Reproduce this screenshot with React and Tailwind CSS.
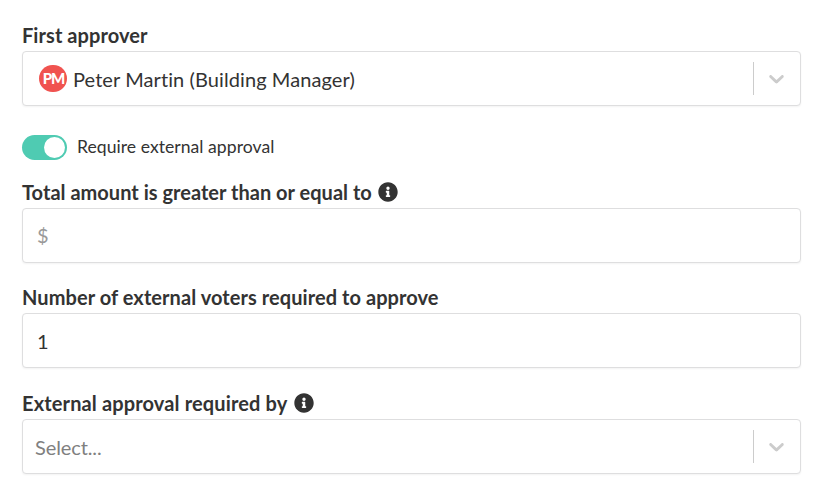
import React from "react";
import { FaInfoCircle } from "react-icons/fa";

const Label = ({ children, info, tracking = "tracking-[0.07px]" }) => (
    <label
        className={`flex h-6 items-center text-[20px] leading-6 font-bold text-[#333333] ${tracking}`}
    >
        {children}
        {info && <FaInfoCircle className="ml-[6px] h-5 w-5" />}
    </label>
);

const Chevron = () => (
    <div className="ml-auto flex items-center">
        <span className="mb-px h-[33px] w-px bg-[#cccccc]" />
        <svg
            viewBox="0 0 20 20"
            className="mr-[11px] ml-[10px] h-[25px] w-[25px] fill-[#cccccc]"
        >
            <path d="M4.516 7.548c0.436-0.446 1.043-0.481 1.576 0l3.908 3.747 3.908-3.747c0.533-0.481 1.141-0.446 1.574 0 0.436 0.445 0.408 1.197 0 1.615-0.406 0.418-4.695 4.502-4.695 4.502-0.217 0.223-0.502 0.335-0.787 0.335s-0.57-0.112-0.789-0.335c0 0-4.287-4.084-4.695-4.502s-0.436-1.17 0-1.615z" />
        </svg>
    </div>
);

const Box = ({ children }) => (
    <div className="mt-1 flex h-[55px] items-center rounded-[4px] border border-[#dededf] bg-white shadow-[0_1px_2px_rgba(0,0,0,0.05)]">
        {children}
    </div>
);

const App = () => {
    return (
        <main className="h-[493px] w-[833px] bg-white pt-[23px] pr-8 pl-[22px] font-['Lato',sans-serif] [font-variant-ligatures:none]">
            <section>
                <Label>First approver</Label>
                <Box>
                    <span className="mb-px ml-4 flex h-[27px] w-7 items-center justify-center rounded-full bg-[#f05350] pl-px text-[15px] font-black tracking-[-1.2px] text-white">
                        PM
                    </span>
                    <span className="ml-[6px] text-[20px] tracking-[0.09px] text-[#333]">
                        Peter Martin (Building Manager)
                    </span>
                    <Chevron />
                </Box>
            </section>

            {/* External approval toggle */}
            <div className="mt-[29px] flex h-[25px] items-center">
                <span className="flex h-[25px] w-[45px] items-center justify-end rounded-full bg-[#4fcbb2] p-[2px]">
                    <span className="h-[21px] w-[21px] rounded-full bg-white" />
                </span>
                <span className="mb-px ml-[10px] text-[17.6px] tracking-[0.03px] text-[#333]">
                    Require external approval
                </span>
            </div>

            <section className="mt-5">
                <Label info tracking="tracking-[0.02px]">
                    Total amount is greater than or equal to
                </Label>
                <Box>
                    <span className="mb-px ml-[14px] text-[20px] text-[#999]">
                        $
                    </span>
                </Box>
            </section>

            <section className="mt-[22px]">
                <Label>Number of external voters required to approve</Label>
                <Box>
                    <span className="ml-[14px] text-[20px] text-[#333]">1</span>
                </Box>
            </section>

            <section className="mt-[23px]">
                <Label info tracking="tracking-[0.14px]">
                    External approval required by
                </Label>
                <Box>
                    <span className="ml-[12px] text-[20px] tracking-[-0.1px] text-[#808080]">
                        Select...
                    </span>
                    <Chevron />
                </Box>
            </section>
        </main>
    );
};

export default App;
